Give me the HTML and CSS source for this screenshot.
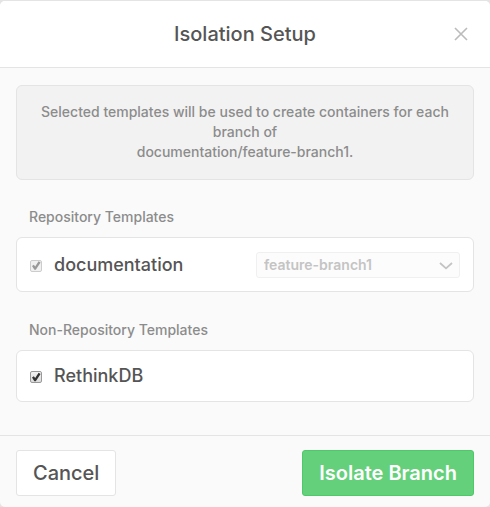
FILE: index.html
```
<!DOCTYPE html>
<html lang="en">
<head>
<meta charset="utf-8">
<meta name="viewport" content="width=device-width, initial-scale=1">
<title>Isolation Setup</title>
<link rel="stylesheet" href="styles.css">
</head>
<body>
<form class="modal">
  <header class="modal-header">
    <h1 class="modal-title">Isolation Setup</h1>
    <button class="close" type="button" aria-label="Close">
      <svg width="14" height="14" viewBox="0 0 14 14" fill="none" stroke="currentColor" stroke-width="1.6"><path d="M1 1l12 12M13 1L1 13"/></svg>
    </button>
  </header>
  <main class="modal-body">
    <p class="notice">Selected templates will be used to create containers for each branch of<br>documentation/feature-branch1.</p>
    <section class="group">
      <h2 class="group-title">Repository Templates</h2>
      <div class="card card-tall">
        <label class="template"><input class="check" type="checkbox" checked disabled>documentation</label>
        <div class="select-wrap">
          <select class="select" aria-label="Branch" disabled><option>feature-branch1</option></select>
          <svg class="chevron" width="14" height="8" viewBox="0 0 14 8" fill="none" stroke="currentColor" stroke-width="1.8"><path d="M1 1l6 5.4L13 1"/></svg>
        </div>
      </div>
    </section>
    <section class="group">
      <h2 class="group-title">Non-Repository Templates</h2>
      <div class="card">
        <label class="template"><input class="check" type="checkbox" checked>RethinkDB</label>
      </div>
    </section>
  </main>
  <footer class="modal-footer">
    <button class="btn" type="button">Cancel</button>
    <button class="btn btn-primary" type="submit">Isolate Branch</button>
  </footer>
</form>
</body>
</html>
```
FILE: styles.css
```
* { box-sizing: border-box; }

body {
  margin: 0;
  background: #e4e4e4;
  color: #555;
  font-family: Inter, "Liberation Sans", sans-serif;
}

.modal {
  margin-top: 1px;
  background: #fafafa;
  border-radius: 5px;
  overflow: hidden;
}

.modal-header {
  display: grid;
  grid-template-columns: 1fr auto 1fr;
  align-items: center;
  height: 67px;
  padding: 0 22px;
  background: #fff;
  border-bottom: 1px solid #e4e4e4;
}

.modal-title {
  grid-column: 2;
  margin: 0;
  font-size: 20px;
  font-weight: 500;
  line-height: 24px;
}

.close {
  display: flex;
  justify-self: end;
  padding: 0;
  border: 0;
  background: none;
  color: #bbb;
}

.modal-body { padding: 17px 16px 33px; }

.notice {
  margin: 0 0 27px;
  padding: 16px 16px 17px;
  border: 1px solid #e4e4e4;
  border-radius: 6px;
  background: #f2f2f2;
  color: #8c8c8c;
  font-size: 14px;
  font-weight: 500;
  line-height: 20px;
  text-align: center;
}

.group + .group { margin-top: 28px; }

.group-title {
  margin: 0 0 10px;
  padding-left: 13px;
  color: #8c8c8c;
  font-size: 14px;
  font-weight: 500;
  line-height: 20px;
}

.card {
  display: flex;
  align-items: center;
  justify-content: space-between;
  min-height: 52px;
  padding: 0 13px;
  border: 1px solid #e4e4e4;
  border-radius: 6px;
  background: #fff;
}

.card-tall { min-height: 55px; }

.template {
  display: flex;
  align-items: center;
  gap: 12px;
  font-size: 18px;
  font-weight: 500;
  line-height: 24px;
}

.check {
  appearance: none;
  width: 12px;
  height: 12px;
  margin: 2px 0 0;
  border: 1px solid #999;
  border-radius: 2px;
  background: linear-gradient(#f2f2f2, #dcdcdc);
  position: relative;
}

.check:checked::after {
  content: "";
  position: absolute;
  inset: 0;
  background: #333;
  clip-path: polygon(10% 55%, 28% 42%, 42% 60%, 76% 8%, 96% 20%, 48% 92%, 34% 92%);
}

.check:disabled { border-color: #ccc; background: #f0f0f0; }
.check:disabled::after { background: #999; }

.select-wrap {
  position: relative;
  width: 204px;
  color: #c4c4c4;
}

.select {
  appearance: none;
  display: block;
  width: 100%;
  height: 26px;
  padding: 0 28px 0 7px;
  border: 1px solid #f0f0f0;
  border-radius: 3px;
  background: #fcfcfc;
  color: #c4c4c4;
  font: 600 14px/20px Inter, "Liberation Sans", sans-serif;
  opacity: 1;
}

.chevron {
  position: absolute;
  top: 10px;
  right: 7px;
  pointer-events: none;
}

.modal-footer {
  display: flex;
  justify-content: space-between;
  padding: 14px 16px 11px;
  border-top: 1px solid #e4e4e4;
}

.btn {
  height: 46px;
  padding: 0 16px;
  border: 1px solid #e4e4e4;
  border-radius: 3px;
  background: #fff;
  color: #555;
  font: 500 20px/24px Inter, "Liberation Sans", sans-serif;
}

.btn-primary {
  border-color: #4bca66;
  background: #65d07b;
  color: #fff;
  font-weight: 600;
}
```
